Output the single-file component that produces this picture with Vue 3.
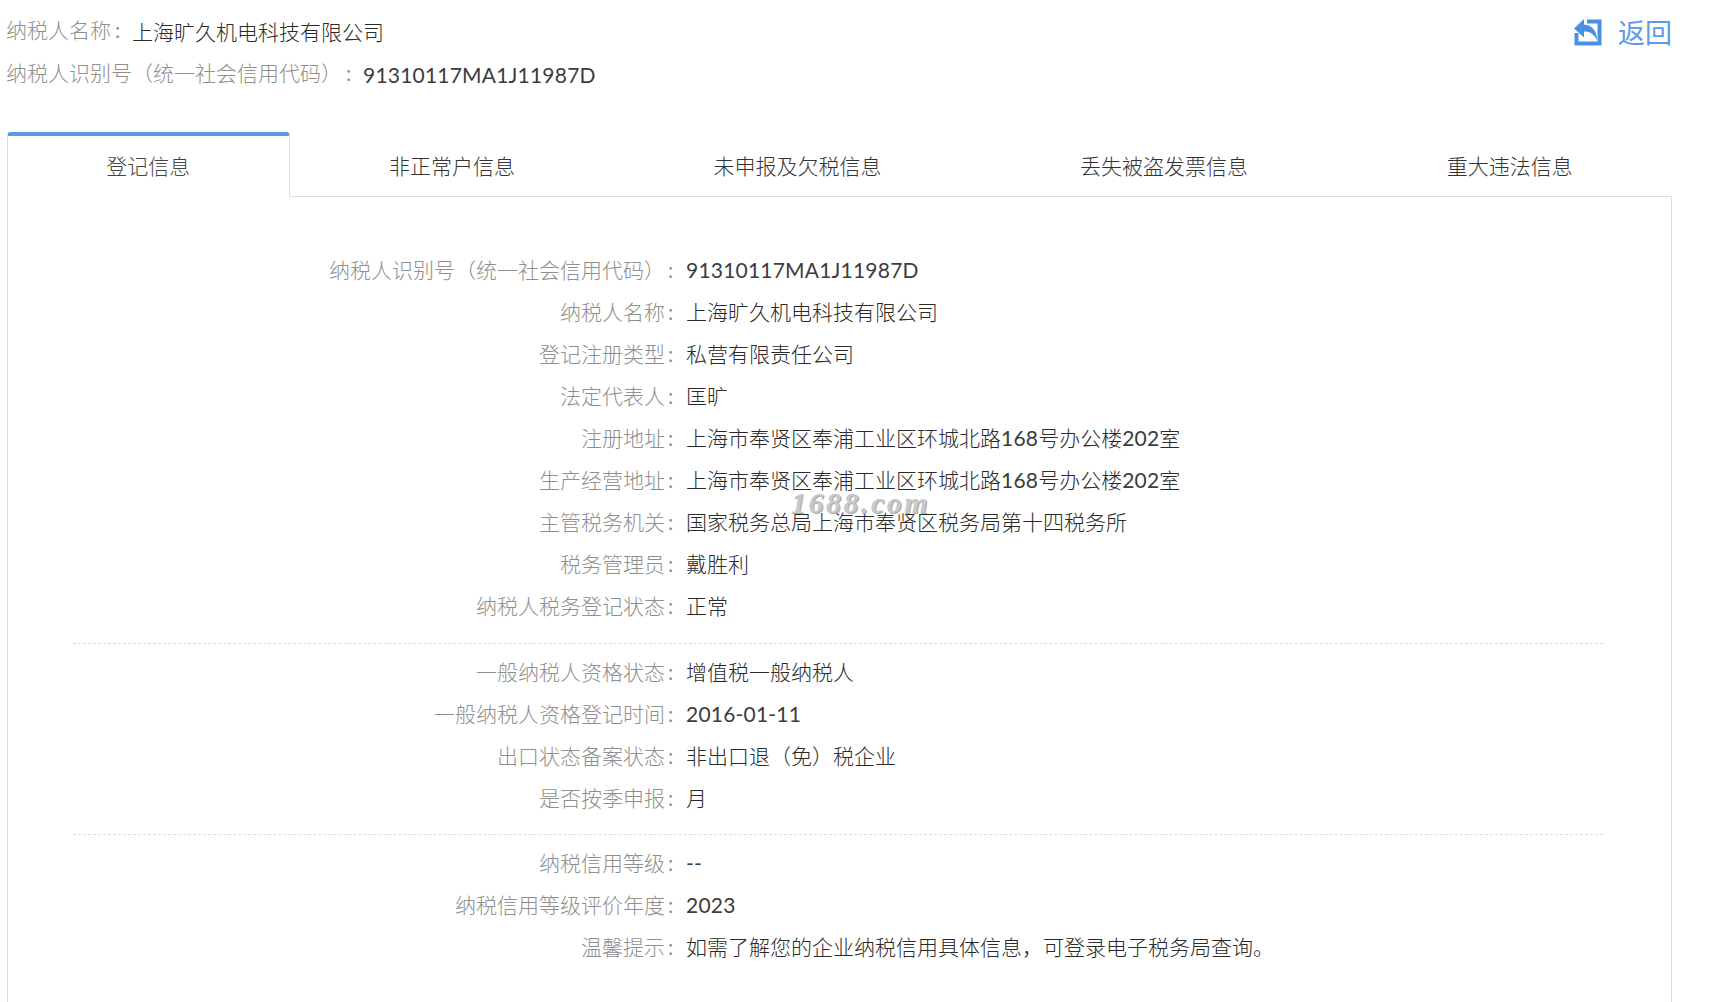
<template>
  <div class="page">
    <div class="head">
      <div class="head-info">
        <div class="head-row">
          <span class="lbl">纳税人名称<i class="colon">:</i></span>
          <span class="val">{{ taxName }}</span>
        </div>
        <div class="head-row">
          <span class="lbl">纳税人识别号（统一社会信用代码）<i class="colon">:</i></span>
          <span class="val latin">{{ taxNo }}</span>
        </div>
      </div>
      <a class="back">
        <svg class="back-icon" viewBox="0 0 28 27" width="28" height="27">
          <path fill="#4a90e2" d="M13 .5h14.500v26H.5V14h4v8.500h19v-18H13z" />
          <path fill="#4a90e2" d="M10 0 0 9.500 10 18.500v-6c6 0 10 2.500 13 8.500 0-9-5-15-13-15.500z" />
        </svg>
        <span>返回</span>
      </a>
    </div>

    <div class="tabs">
      <div
        v-for="(tab, i) in tabs"
        :key="tab"
        class="tab"
        :class="{ active: i === 0 }"
      >
        {{ tab }}
      </div>
    </div>

    <div class="panel">
      <div v-for="(group, g) in groups" :key="g" class="group">
        <div v-for="row in group" :key="row[0]" class="row">
          <span class="row-label">{{ row[0] }}<i class="colon">:</i></span>
          <span class="row-value">
            <span
              v-for="(part, p) in splitLatin(row[1])"
              :key="p"
              :class="{ latin: p % 2 === 1 }"
            >{{ part }}</span>
          </span>
        </div>
      </div>
      <div class="watermark">1688.com</div>
    </div>
  </div>
</template>

<script setup>
const taxName = "上海旷久机电科技有限公司";
const taxNo = "91310117MA1J11987D";
const addr = "上海市奉贤区奉浦工业区环城北路168号办公楼202室";

const tabs = ["登记信息", "非正常户信息", "未申报及欠税信息", "丢失被盗发票信息", "重大违法信息"];

const groups = [
  [
    ["纳税人识别号（统一社会信用代码）", taxNo],
    ["纳税人名称", taxName],
    ["登记注册类型", "私营有限责任公司"],
    ["法定代表人", "匡旷"],
    ["注册地址", addr],
    ["生产经营地址", addr],
    ["主管税务机关", "国家税务总局上海市奉贤区税务局第十四税务所"],
    ["税务管理员", "戴胜利"],
    ["纳税人税务登记状态", "正常"],
  ],
  [
    ["一般纳税人资格状态", "增值税一般纳税人"],
    ["一般纳税人资格登记时间", "2016-01-11"],
    ["出口状态备案状态", "非出口退（免）税企业"],
    ["是否按季申报", "月"],
  ],
  [
    ["纳税信用等级", "--"],
    ["纳税信用等级评价年度", "2023"],
    ["温馨提示", "如需了解您的企业纳税信用具体信息，可登录电子税务局查询。"],
  ],
];

// latin runs end up at odd indexes
function splitLatin(text) {
  return text.split(/([0-9A-Za-z-]+)/);
}
</script>

<style>
html,
body {
  margin: 0;
  overflow: hidden;
  background: #fff;
}
</style>

<style scoped>
.page {
  height: 1002px;
  padding: 0 46px 0 7px;
  box-sizing: border-box;
  display: flex;
  flex-direction: column;
  font-family: Lato, "Noto Sans CJK SC", sans-serif;
  font-size: 21px;
  font-weight: 300;
  color: #333;
  overflow: hidden;
  text-spacing-trim: space-all;
}
/* colon sits a little right of the label, in a full-width cell */
.colon {
  display: inline-block;
  width: 21px;
  padding-left: 3px;
  box-sizing: border-box;
  text-align: left;
  font-style: normal;
  font-weight: 400;
}
.head {
  display: flex;
  justify-content: space-between;
  height: 132px;
  flex: none;
}
.head-info {
  padding-top: 8px;
  margin-left: -1px;
}
.head-row {
  height: 43px;
  line-height: 43px;
}
.lbl {
  color: #8f8f8f;
  vertical-align: 2px;
}
.lbl .colon {
  padding-left: 4px;
}
.val {
  color: #2a2a2a;
}
.latin,
.val.latin {
  font-weight: 400;
  letter-spacing: 0.2px;
  color: #3c3c3c;
}
.back {
  display: flex;
  align-items: center;
  gap: 16px;
  height: 27px;
  margin-top: 18px;
  font-size: 27px;
  font-weight: 400;
  color: #5b9be6;
}
.back-icon {
  margin-top: 1px;
}
.tabs {
  display: flex;
  flex: none;
  height: 65px;
}
.tab {
  flex: 1 1 auto;
  padding: 0 1px;
  text-align: center;
  line-height: 68px;
  border-bottom: 1px solid #ddd;
  height: 64px;
}
.tab.active {
  padding: 0;
  border: 1px solid #ddd;
  border-top: 4px solid #5b9bde;
  border-bottom: none;
  border-radius: 4px 4px 0 0;
  height: 61px;
  line-height: 60px;
  color: #444;
}
.panel {
  position: relative;
  flex: 1;
  border: 1px solid #ddd;
  border-top: none;
  border-bottom: none;
  padding: 52px 68px 0 65px;
}
.group + .group {
  border-top: 1px dashed #ddd;
  margin-top: 16px;
  padding-top: 7px;
}
.group + .group + .group {
  margin-top: 15px;
}
.row {
  display: flex;
  height: 42px;
  line-height: 42px;
}
.row-label {
  width: 613px;
  flex: none;
  text-align: right;
  color: #8f8f8f;
}
.row-value {
  color: #2a2a2a;
}
.watermark {
  position: absolute;
  left: 783px;
  top: 289px;
  font-family: "Liberation Serif", serif;
  font-style: italic;
  font-weight: bold;
  font-size: 30px;
  letter-spacing: 2.500px;
  color: #c8c8c8;
  text-shadow: 1px 1px 0 #aaa;
}
</style>
